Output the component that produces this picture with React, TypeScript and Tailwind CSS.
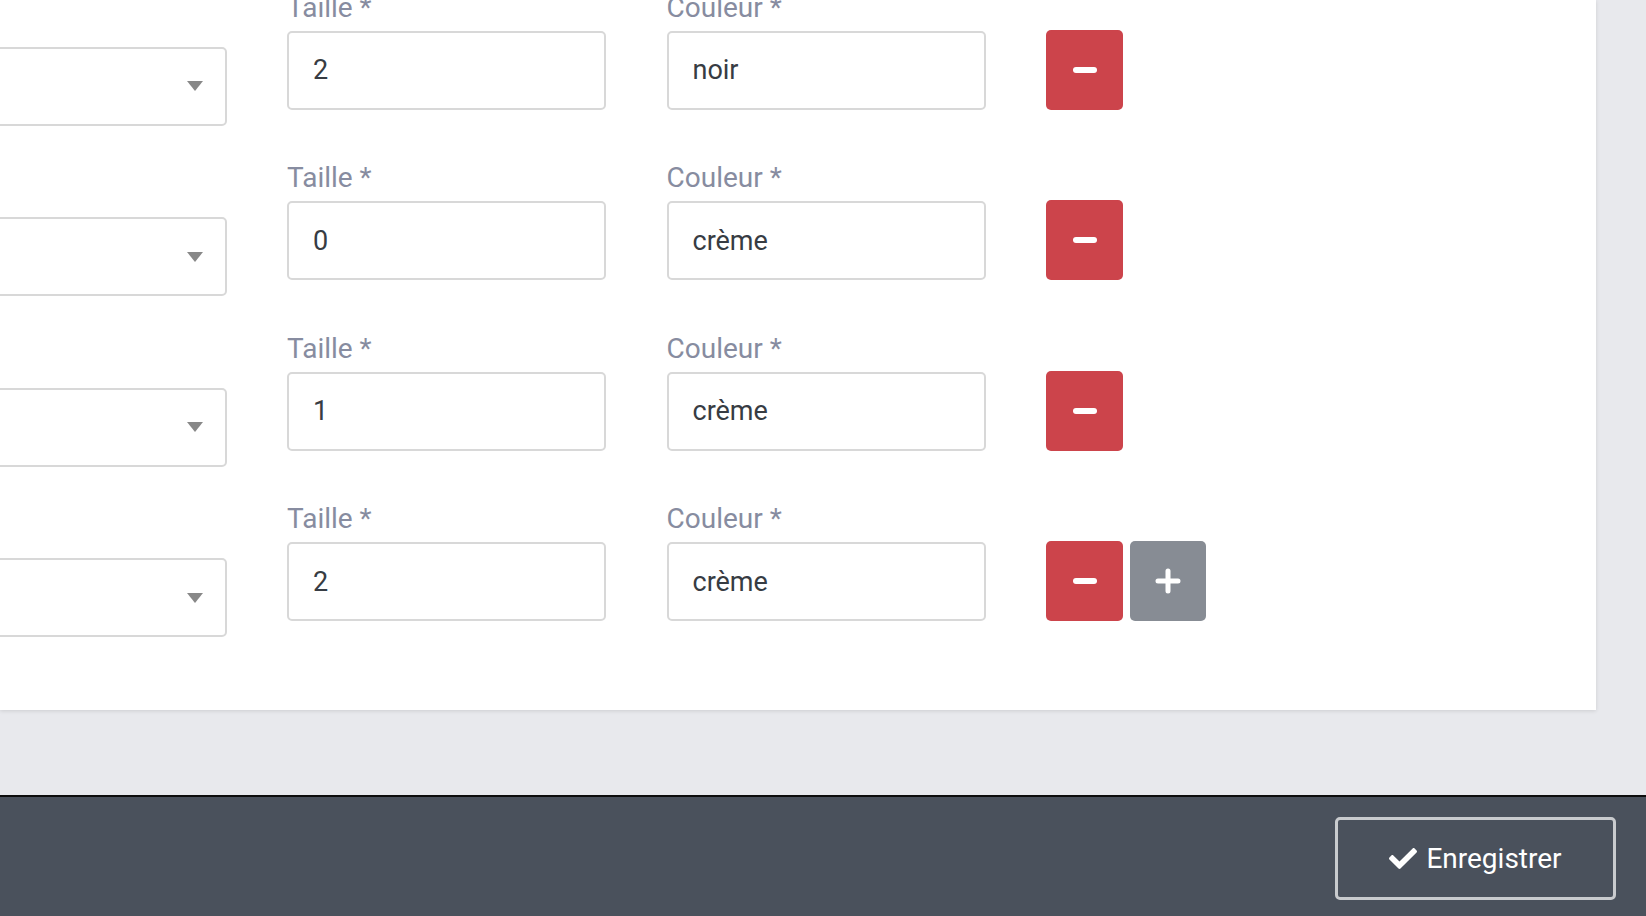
import React from 'react';

interface Variant {
  taille: string;
  couleur: string;
}

const variants: Variant[] = [
  { taille: '2', couleur: 'noir' },
  { taille: '0', couleur: 'crème' },
  { taille: '1', couleur: 'crème' },
  { taille: '2', couleur: 'crème' },
];

const MinusIcon = () => (
  <svg width="26" height="8" viewBox="0 0 26 8">
    <line x1="4" y1="4" x2="22" y2="4" stroke="white" strokeWidth="6" strokeLinecap="round" />
  </svg>
);

const PlusIcon = () => (
  <svg width="26" height="26" viewBox="0 0 26 26">
    <path d="M13 3v20M3 13h20" stroke="white" strokeWidth="5" strokeLinecap="round" />
  </svg>
);

const Field: React.FC<{ label: string; value: string }> = ({ label, value }) => (
  <div className="flex flex-col">
    <label className="h-[34px] leading-[34px] text-[28px] text-[#878ca0] whitespace-nowrap">{label}</label>
    <input
      readOnly
      defaultValue={value}
      className="mt-[6px] h-[79px] w-full border-2 border-[#d8d8d8] rounded-[5px] bg-white px-[24px] text-[27px] text-[#373c43] outline-none"
    />
  </div>
);

const VariantRow: React.FC<{ variant: Variant; last: boolean }> = ({ variant, last }) => (
  <div className="grid grid-cols-[319px_319px_319px_auto] gap-x-[60.5px] items-start">
    <div className="pt-[56px]">
      <div className="h-[79px] border-2 border-[#d8d8d8] rounded-[5px] flex items-center justify-end pr-[22px]">
        <svg width="16" height="10" viewBox="0 0 16 10">
          <path d="M0 0h16L8 10z" fill="#888888" />
        </svg>
      </div>
    </div>
    <Field label="Taille *" value={variant.taille} />
    <Field label="Couleur *" value={variant.couleur} />
    <div className="pt-[39px] flex gap-[7px]">
      <button className="w-[77px] h-[80px] rounded-[5px] bg-[#cc444b] flex items-center justify-center">
        <MinusIcon />
      </button>
      {last && (
        <button className="w-[76px] h-[80px] rounded-[5px] bg-[#878c94] flex items-center justify-center">
          <PlusIcon />
        </button>
      )}
    </div>
  </div>
);

export default function App() {
  return (
    <div className="w-[1646px] h-[916px] flex flex-col overflow-hidden font-['Roboto',sans-serif]">
      <main className="flex-1 bg-[#e8e9ed] pr-[50px] pb-[85px] overflow-hidden">
        <div className="h-full bg-white shadow-[0_1px_4px_rgba(0,0,0,0.12)] overflow-hidden">
          <div className="ml-[-92.5px] mt-[-9.5px] flex flex-col gap-y-[35.5px]">
            {variants.map((v, i) => (
              <VariantRow key={i} variant={v} last={i === variants.length - 1} />
            ))}
          </div>
        </div>
      </main>
      <footer className="h-[121px] border-t-2 border-[#0d0d0d] bg-[#4a515c] flex justify-end items-start pt-[20px] pr-[30px]">
        <button className="w-[281px] h-[83px] border-[3px] border-[#c9cbce] rounded-[5px] flex items-center justify-center gap-[9px] text-white text-[28px]">
          <svg width="28" height="21" viewBox="0 65 512 382" fill="white">
            <path d="M173.898 439.404l-166.4-166.4c-9.997-9.997-9.997-26.206 0-36.204l36.203-36.204c9.997-9.998 26.207-9.998 36.204 0L192 312.69 432.095 72.596c9.997-9.997 26.207-9.997 36.204 0l36.203 36.204c9.997 9.997 9.997 26.206 0 36.204l-294.4 294.401c-9.998 9.997-26.207 9.997-36.204-.001z" />
          </svg>
          <span>Enregistrer</span>
        </button>
      </footer>
    </div>
  );
}
